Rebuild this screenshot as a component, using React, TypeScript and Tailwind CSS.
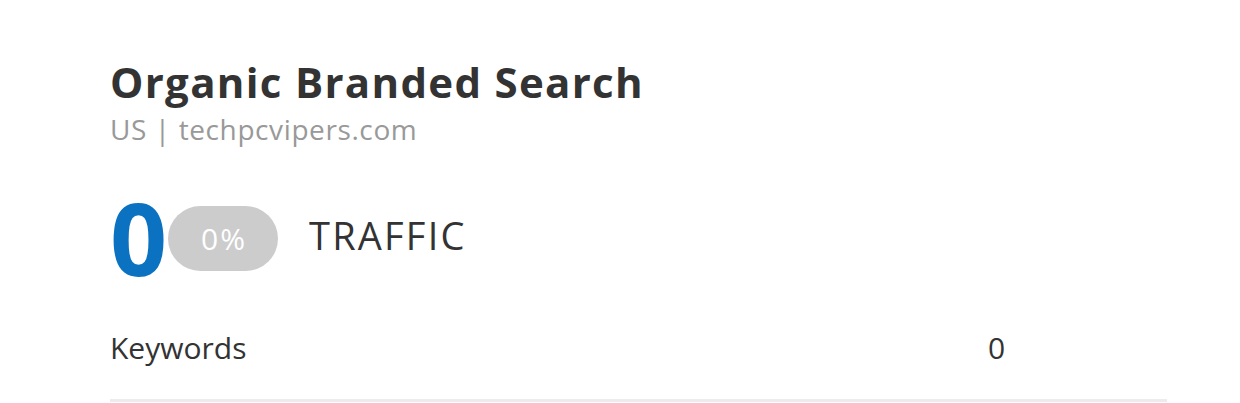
export default function App() {
  return (
    <div className="w-[1240px] h-[403px] bg-white overflow-hidden" style={{ fontFamily: '"Open Sans", "Noto Sans", sans-serif' }}>
      <div className="pl-[110px] pr-[73px] pt-[56px]">
        <h1 className="text-[42px] leading-[52px] font-bold text-[#333333] tracking-[1.3px]">Organic Branded Search</h1>
        <div className="text-[28px] leading-[36px] text-[#999999] mt-[3px] tracking-[0.6px]">US | techpcvipers.com</div>
        <div className="flex items-start mt-[40px] h-[100px]">
          <span className="w-[58px] text-[100px] leading-[100px] font-bold text-[#0a72c0] tracking-[-1px]">0</span>
          <span className="mt-[19px] w-[110px] h-[65px] rounded-full bg-[#cccccc] text-white text-[30px] leading-[40px] tracking-[2px] pl-[2px] flex items-center justify-center">0%</span>
          <span className="mt-[29px] ml-[31px] text-[38px] leading-[38px] tracking-[2.2px] text-[#333333]">TRAFFIC</span>
        </div>
        <div className="flex items-start mt-[41px] pb-[31px] border-b-[3px] border-[#ececec]">
          <span className="text-[30px] leading-[40px] text-[#333333] w-[878px]">Keywords</span>
          <span className="text-[30px] leading-[40px] text-[#333333]">0</span>
        </div>
      </div>
    </div>
  );
}
